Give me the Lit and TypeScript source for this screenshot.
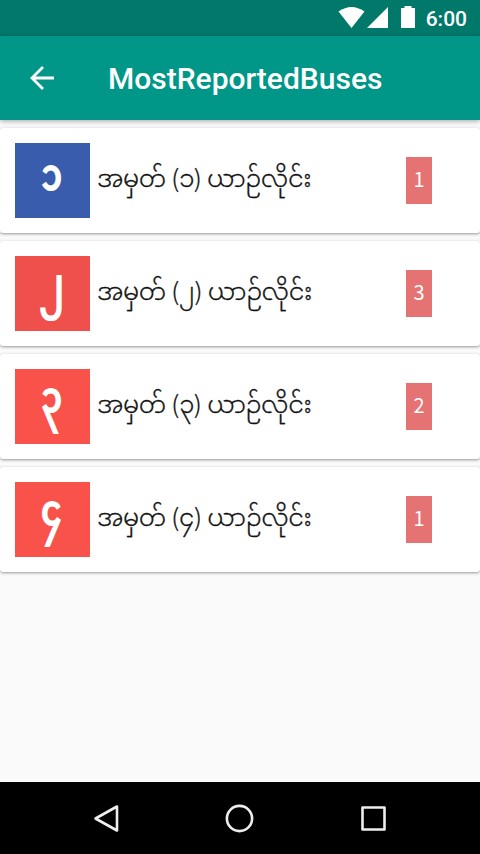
import { LitElement, html, css } from 'lit';
import { customElement, property } from 'lit/decorators.js';
import { classMap } from 'lit/directives/class-map.js';

interface BusLine {
  digit: string;
  reports: number;
  color: 'blue' | 'brick' | 'red';
}

const LINES: BusLine[] = [
  { digit: '၁', reports: 1, color: 'blue' },
  { digit: '၂', reports: 3, color: 'brick' },
  { digit: '၃', reports: 2, color: 'red' },
  { digit: '၄', reports: 1, color: 'red' },
];

@customElement('status-bar')
export class StatusBar extends LitElement {
  static styles = css`
    :host {
      display: flex;
      align-items: center;
      justify-content: flex-end;
      box-sizing: border-box;
      height: 36px;
      padding-right: 13px;
      background: #00796b;
      color: #fff;
      font: 500 21px/36px Roboto, sans-serif;
    }
    svg {
      display: block;
      fill: #fff;
    }
    .time {
      margin-left: 10px;
      padding-top: 1px;
    }
  `;

  render() {
    return html`
      <svg width="78" height="36" viewBox="0 0 78 36">
        <path d="M0.5 11.5 Q13.5 2.5 26.5 11.5 L13.5 28 Z" />
        <path d="M29 28 L50 7 V28 Z" />
        <path d="M63 8 h3.500 v-2 h7 v2 h3.500 v20 h-14 Z" />
      </svg>
      <span class="time">6:00</span>
    `;
  }
}

@customElement('tool-bar')
export class ToolBar extends LitElement {
  static styles = css`
    :host {
      display: flex;
      align-items: center;
      box-sizing: border-box;
      height: 84px;
      padding-left: 24px;
      background: #009688;
      color: #fff;
      box-shadow: 0 1px 5px rgba(0, 0, 0, 0.35);
    }
    svg {
      display: block;
      width: 36px;
      height: 36px;
      fill: none;
      stroke: #fff;
      stroke-width: 2.800;
    }
    h1 {
      margin: 2px 0 0 48px;
      font: 500 30px/36px Roboto, sans-serif;
    }
  `;

  @property() heading = '';

  render() {
    return html`
      <svg viewBox="0 0 36 36">
        <path d="M30 18 H8 M19 7 L8 18 L19 29" />
      </svg>
      <h1>${this.heading}</h1>
    `;
  }
}

@customElement('bus-card')
export class BusCard extends LitElement {
  static styles = css`
    :host {
      display: flex;
      align-items: center;
      box-sizing: border-box;
      height: 105px;
      padding: 0 48px 0 15px;
      border-radius: 3px;
      background: #fff;
      box-shadow: 0 1px 3px rgba(0, 0, 0, 0.4);
      font-family: 'Noto Sans', 'Noto Sans Myanmar', Padauk, sans-serif;
    }
    .tile {
      display: flex;
      align-items: center;
      justify-content: center;
      width: 75px;
      height: 75px;
      color: #fff;
      font-size: 40px;
      font-weight: 700;
      line-height: 75px;
    }
    .tile span {
      transform: translate(-1px, -11px) scale(0.88, 1.1);
    }
    .blue {
      background: #3a5cad;
    }
    .blue span {
      transform: translate(-1px, -8px) scale(0.88, 1.18);
    }
    .brick {
      background: #ef504b;
    }
    .red {
      background: #f8524b;
    }
    .name {
      flex: 1;
      margin: 0 0 8px 7px;
      color: #111;
      font-family: 'Noto Sans CJK SC', 'Noto Sans Myanmar', Padauk, sans-serif;
      font-size: 24px;
      font-weight: 300;
      line-height: 40px;
      white-space: nowrap;
      word-spacing: 0.5px;
      -webkit-text-stroke: 0.35px #111;
    }
    .count {
      width: 26px;
      height: 47px;
      background: #e57373;
      color: #fff;
      font-family: 'Noto Sans CJK SC', sans-serif;
      font-size: 20px;
      line-height: 44px;
      text-align: center;
    }
  `;

  @property({ attribute: false }) line!: BusLine;

  render() {
    const { digit, reports, color } = this.line;
    return html`
      <div class=${classMap({ tile: true, [color]: true })}><span>${digit}</span></div>
      <div class="name">အမှတ် (${digit}) ယာဉ်လိုင်း</div>
      <div class="count">${reports}</div>
    `;
  }
}

@customElement('nav-bar')
export class NavBar extends LitElement {
  static styles = css`
    :host {
      display: flex;
      align-items: center;
      justify-content: center;
      gap: 98px;
      height: 72px;
      background: #000;
    }
    svg {
      display: block;
      width: 36px;
      height: 36px;
      fill: none;
      stroke: #eee;
      stroke-width: 2.600;
      stroke-linejoin: round;
    }
  `;

  render() {
    return html`
      <svg viewBox="0 0 36 36"><path d="M7.500 18.500 L29 6.500 V30.500 Z" /></svg>
      <svg viewBox="0 0 36 36"><circle cx="17.500" cy="18.500" r="12.600" /></svg>
      <svg viewBox="0 0 36 36"><path d="M6.500 7.500 H28.500 V29.500 H6.500 Z" /></svg>
    `;
  }
}

@customElement('app-root')
export class AppRoot extends LitElement {
  static styles = css`
    :host {
      display: flex;
      flex-direction: column;
      height: 100vh;
      overflow: hidden;
      background: #fafafa;
    }
    main {
      flex: 1;
      display: flex;
      flex-direction: column;
      gap: 8px;
      padding-top: 8px;
    }
  `;

  render() {
    return html`
      <status-bar></status-bar>
      <tool-bar heading="MostReportedBuses"></tool-bar>
      <main>${LINES.map((line) => html`<bus-card .line=${line}></bus-card>`)}</main>
      <nav-bar></nav-bar>
    `;
  }
}
